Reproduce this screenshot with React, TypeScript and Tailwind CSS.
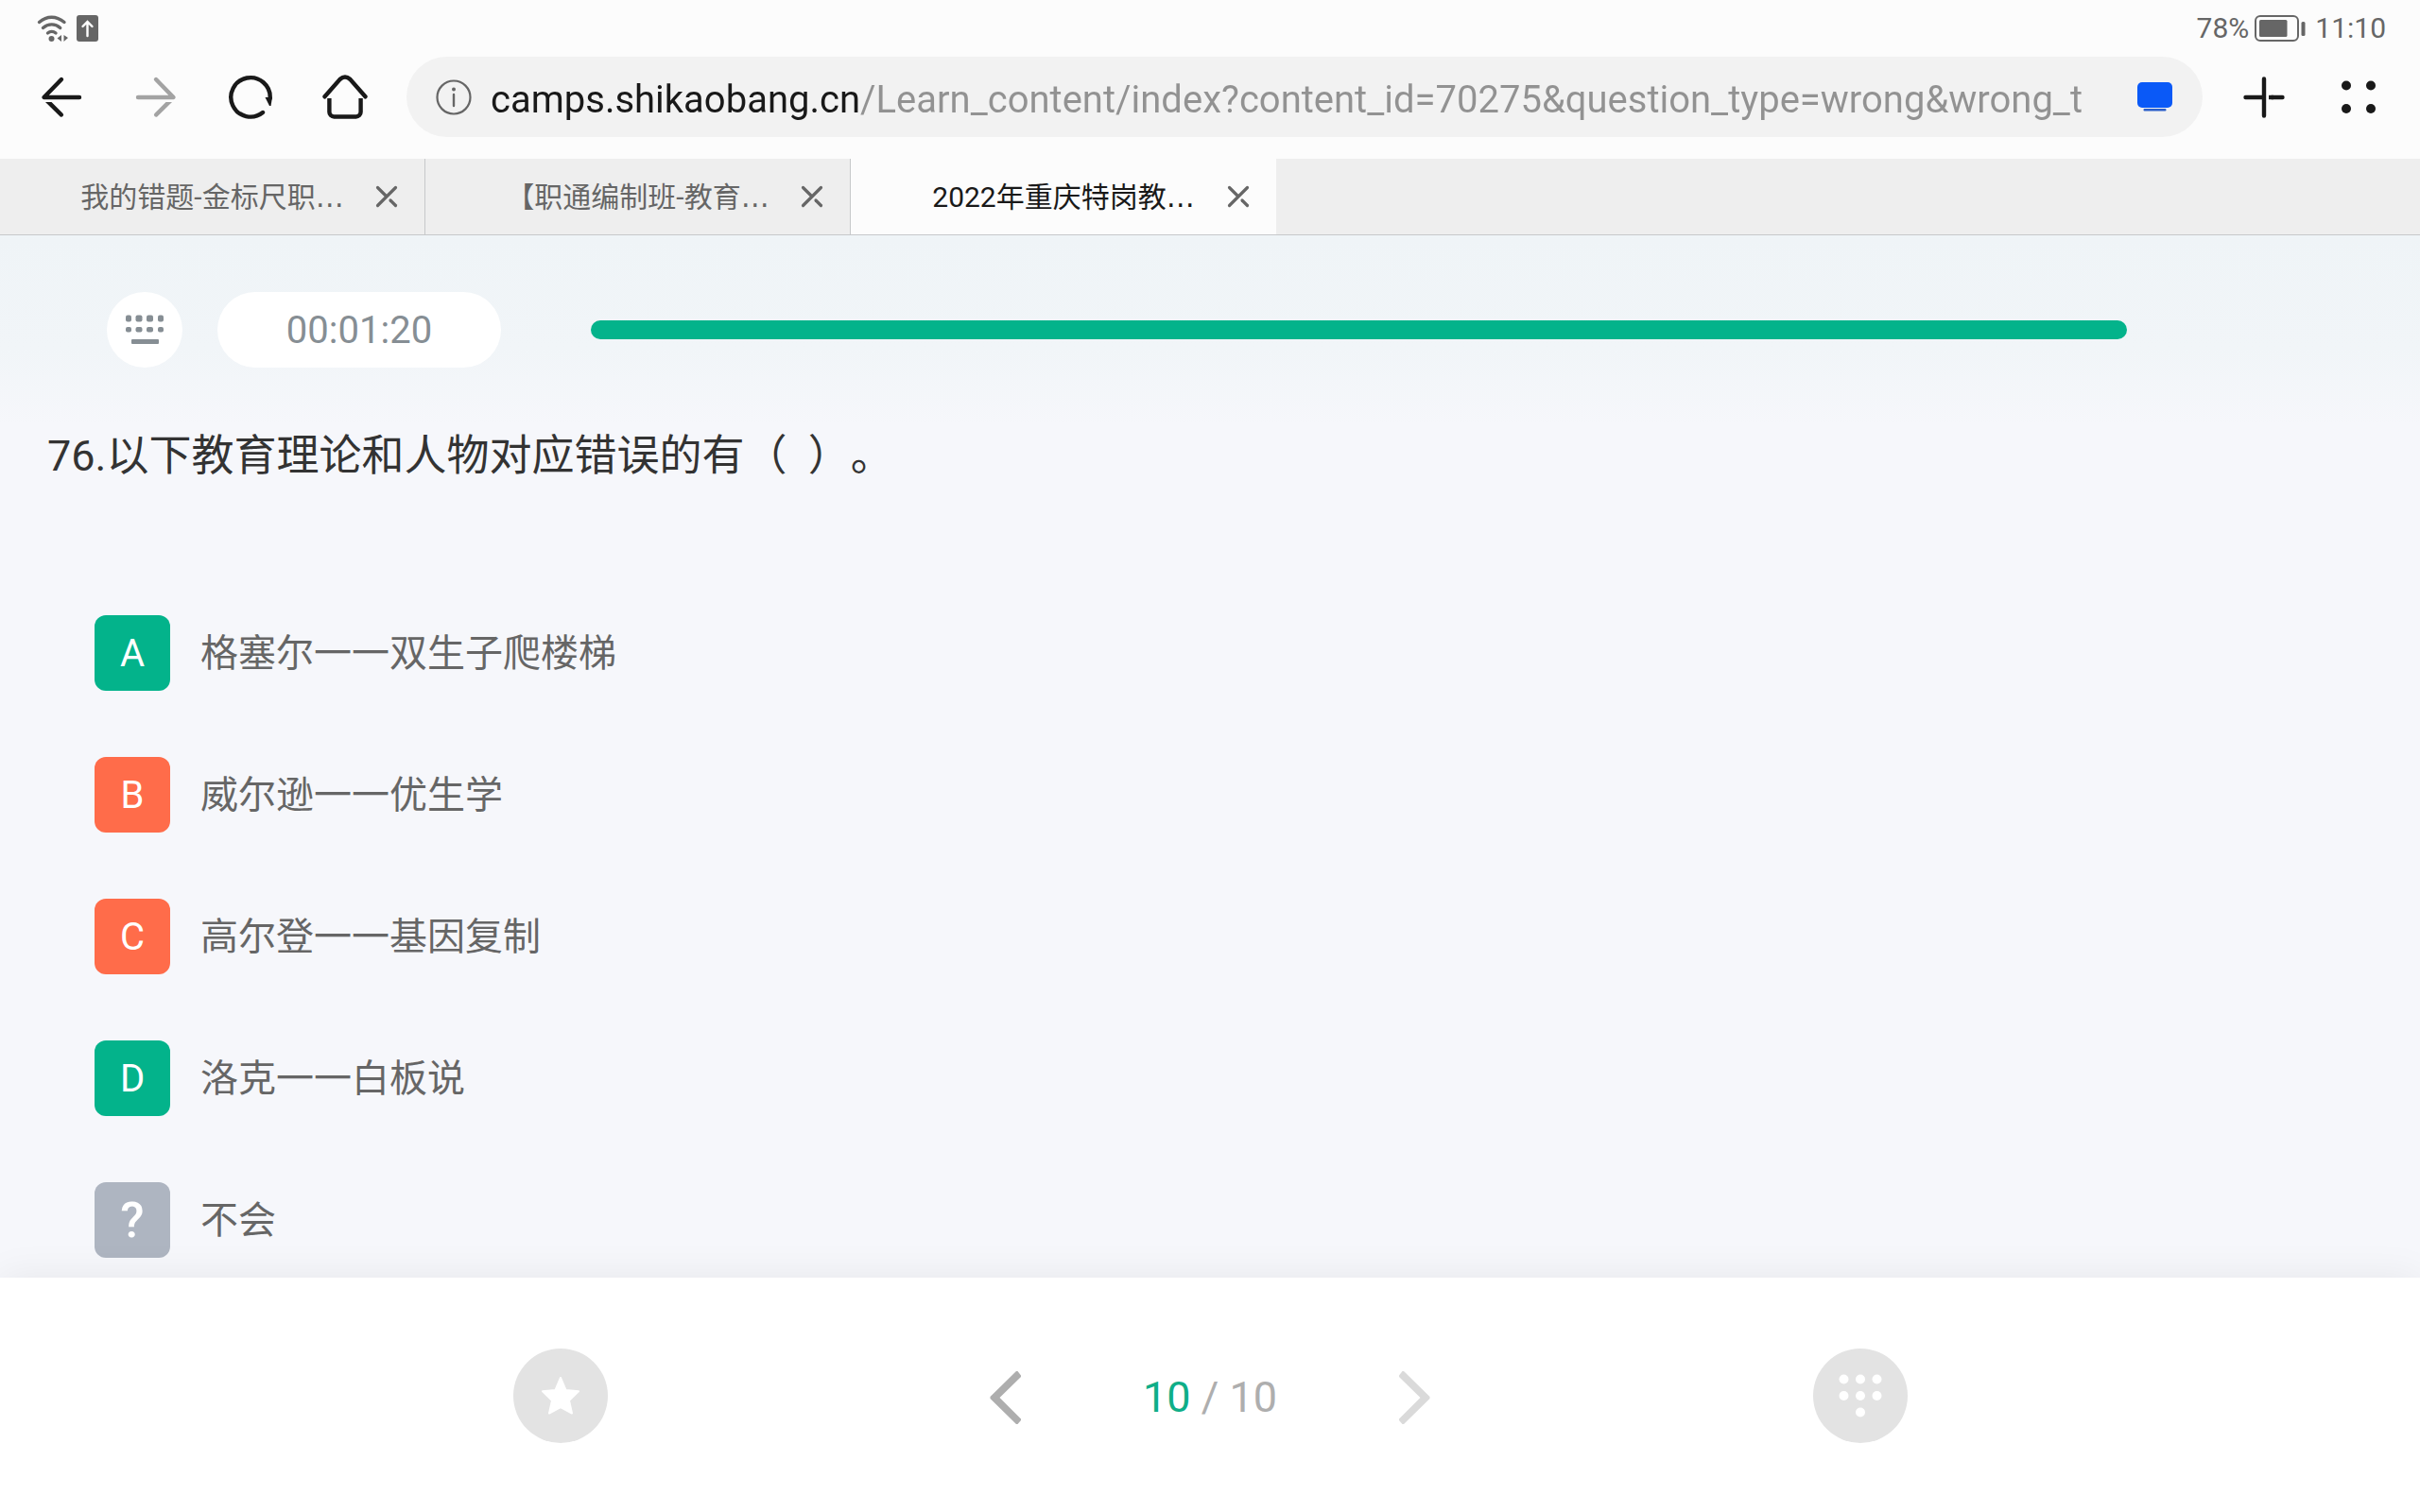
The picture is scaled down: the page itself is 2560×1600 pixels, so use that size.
import React, { useState } from "react";
import clsx from "clsx";

const tabs = [
  { id: 1, title: "我的错题-金标尺职" },
  { id: 2, title: "【职通编制班-教育" },
  { id: 3, title: "2022年重庆特岗教" },
];

const options = [
  { key: "A", text: "格塞尔一一双生子爬楼梯", color: "bg-[#03b38b]" },
  { key: "B", text: "威尔逊一一优生学", color: "bg-[#ff6c4a]" },
  { key: "C", text: "高尔登一一基因复制", color: "bg-[#ff6c4a]" },
  { key: "D", text: "洛克一一白板说", color: "bg-[#03b38b]" },
  { key: "?", text: "不会", color: "bg-[#aeb5c1]" },
];

const WifiIcon = () => (
  <svg width="34" height="30" viewBox="0 0 34 30" fill="none" aria-hidden="true">
    <g stroke="#666" strokeWidth="3.4" strokeLinecap="round">
      <path d="M2.5 8.5C10.5 1.5 20.5 1.5 29 8.5" />
      <path d="M6.5 14.5C12 9.7 19.5 9.7 24.7 14.5" />
      <path d="M11.5 20C14 18 17.5 18 20 20" />
    </g>
    <circle cx="15.5" cy="26" r="3" fill="#666" />
    <path d="M26 22v7l-4.500-3.500zM28.500 22l4.500 3-4.500 4z" fill="#666" />
  </svg>
);

const UploadIcon = () => (
  <svg width="23" height="28" viewBox="0 0 23 28" fill="none" aria-hidden="true">
    <rect width="23" height="28" rx="3" fill="#666" />
    <path
      d="M11.5 22V8M6.5 12l5-5 5 5"
      stroke="#fff"
      strokeWidth="2.4"
      strokeLinecap="round"
    />
  </svg>
);

const BatteryIcon = () => (
  <svg width="54" height="28" viewBox="0 0 54 28" fill="none" aria-hidden="true">
    <rect x="1" y="1" width="45" height="26" rx="5" stroke="#666" strokeWidth="2" />
    <rect x="5" y="5" width="29.5" height="18" rx="1.5" fill="#666" />
    <rect x="49.5" y="7" width="4" height="15" rx="1.5" fill="#666" />
  </svg>
);

const ArrowIcon = ({ flip }: { flip?: boolean }) => (
  <svg
    width="48"
    height="48"
    viewBox="0 0 48 48"
    fill="none"
    aria-hidden="true"
    className={clsx(flip && "-scale-x-100")}
  >
    <path
      d="M24 5 5.500 24H43"
      stroke="currentColor"
      strokeWidth="4.4"
      strokeLinecap="round"
      strokeLinejoin="round"
    />
    <path d="M7 29h6.500l12 12a2.200 2.200 0 0 1-3 3.200z" fill="currentColor" />
  </svg>
);

const ReloadIcon = () => (
  <svg width="48" height="48" viewBox="0 0 48 48" fill="none" aria-hidden="true">
    <path
      d="M37 40A20.700 20.700 0 1 1 44.700 25"
      stroke="#191919"
      strokeWidth="4.4"
      strokeLinecap="round"
    />
    <path d="M39.5 24H47L45.500 33h-1.500z" fill="#191919" />
  </svg>
);

const HomeIcon = () => (
  <svg width="48" height="48" viewBox="0 0 48 48" fill="none" aria-hidden="true">
    <path
      d="M2.5 23.300 18.500 5Q24 0 29.500 5L45.500 23.300"
      stroke="#191919"
      strokeWidth="4.4"
      strokeLinecap="round"
    />
    <path
      d="M7.4 25V39.500a5 5 0 0 0 5 5h23.200a5 5 0 0 0 5-5V25"
      stroke="#191919"
      strokeWidth="4.4"
    />
  </svg>
);

const InfoIcon = () => (
  <svg width="38" height="38" viewBox="0 0 38 38" fill="none" aria-hidden="true">
    <circle cx="19" cy="19" r="17.5" stroke="#666" strokeWidth="2.2" />
    <circle cx="19" cy="10.5" r="2" fill="#666" />
    <path d="M19 16v12" stroke="#666" strokeWidth="2.4" strokeLinecap="round" />
  </svg>
);

const CloseIcon = () => (
  <svg width="24" height="24" viewBox="0 0 24 24" fill="none" aria-hidden="true">
    <g stroke="#666" strokeWidth="3.2" strokeLinecap="round">
      <path d="M21.5 2.5 2.500 21.500M2.500 2.500 11.500 11.500" />
      <path d="M16 16l5.5 5.5" />
    </g>
  </svg>
);

const Chevron = ({ flip }: { flip?: boolean }) => (
  <svg
    width="34"
    height="58"
    viewBox="0 0 34 58"
    fill="currentColor"
    aria-hidden="true"
    className={clsx(flip && "-scale-x-100")}
  >
    <path d="M28 1h1.500L33 5.500v1.500L10.500 29 33 51.500v1.500L29.500 57H28L.500 30v-2z" />
  </svg>
);

const KeyboardIcon = () => (
  <svg width="40" height="32" viewBox="0 0 40 32" fill="#868e94" aria-hidden="true">
    {[0, 10.5, 22, 34].map((x, i) => (
      <g key={x}>
        <rect x={x} y="0.5" width={i % 3 ? 7 : 6} height="7" rx="2" />
        <rect x={x} y="13" width={i % 3 ? 7 : 6} height="5.5" rx="2" />
      </g>
    ))}
    <rect x="6" y="26" width="29" height="5" rx="1" />
  </svg>
);

const KeypadIcon = () => (
  <svg width="46" height="46" viewBox="0 0 46 46" fill="#fff" aria-hidden="true">
    {[5.5, 23, 40.5].map((x) => (
      <g key={x}>
        <circle cx={x} cy="5.5" r="5" />
        <circle cx={x} cy="23" r="5" />
      </g>
    ))}
    <circle cx="23" cy="40.5" r="5" />
  </svg>
);

const App = () => {
  const [activeTab, setActiveTab] = useState(3);
  const [url, setUrl] = useState(
    "camps.shikaobang.cn/Learn_content/index?content_id=70275&question_type=wrong&wrong_t"
  );

  return (
    <div className="min-h-screen w-full flex flex-col bg-[#fcfcfc] font-[Roboto,'Noto_Sans_CJK_SC',sans-serif] [text-spacing-trim:space-all]">
      <header>
        <div className="h-[60px] flex items-center justify-between pl-[39px] pr-9 text-[30px] leading-none text-[#666]">
          <div className="flex items-center gap-2">
            <WifiIcon />
            <UploadIcon />
          </div>
          <div className="flex items-center">
            <span>78%</span>
            <span className="ml-1.5 mr-2.5">
              <BatteryIcon />
            </span>
            <span>11:10</span>
          </div>
        </div>

        <div className="flex items-center px-[15px] pb-[23px] text-[#191919]">
          <button aria-label="后退" className="w-[100px] flex justify-center">
            <ArrowIcon />
          </button>
          <button
            aria-label="前进"
            className="w-[100px] flex justify-center text-[#a3a3a3]"
          >
            <ArrowIcon flip />
          </button>
          <button aria-label="刷新" className="w-[100px] flex justify-center">
            <ReloadIcon />
          </button>
          <button aria-label="主页" className="w-[100px] flex justify-center">
            <HomeIcon />
          </button>
          <div className="flex-1 min-w-0 h-[85px] mx-[15px] pl-[31px] pr-8 flex items-center rounded-full bg-[#f2f2f2]">
            <InfoIcon />
            {/* host is dark, the rest of the address is grey */}
            <input
              aria-label="网址"
              className="flex-1 min-w-0 ml-5 mr-8 h-[60px] pt-1.5 text-[40px] outline-none text-transparent bg-clip-text bg-[linear-gradient(to_right,#191919_391px,#929292_391px)]"
              value={url}
              onChange={(event) => setUrl(event.target.value)}
            />
            <button aria-label="电脑模式">
              <svg width="37" height="31" viewBox="0 0 37 31" aria-hidden="true">
                <rect width="37" height="27" rx="5" fill="#0a59f7" />
                <rect x="6.5" y="28" width="24" height="2.5" rx="1" fill="#2b5fc9" />
              </svg>
            </button>
          </div>
          <button aria-label="新建标签页" className="w-[100px] flex justify-center">
            <svg width="44" height="44" viewBox="0 0 44 44" fill="none" aria-hidden="true">
              <g stroke="#191919" strokeWidth="4.4" strokeLinecap="round">
                <path d="M22 2.5v39M2.500 22H20M41.500 22H30" />
              </g>
              <path d="M27 19.8h5v4.400h-5z" fill="#191919" />
            </svg>
          </button>
          <button aria-label="菜单" className="w-[100px] flex justify-center">
            <svg width="36" height="36" viewBox="0 0 36 36" fill="#191919" aria-hidden="true">
              <circle cx="5" cy="5.5" r="5" />
              <circle cx="31" cy="5.5" r="5" />
              <circle cx="5" cy="30" r="5" />
              <circle cx="31" cy="30" r="5" />
            </svg>
          </button>
        </div>

        <nav className="flex h-[81px] bg-[#eee] border-b border-[#c6c8ca]">
          {tabs.map((tab) => (
            <div
              key={tab.id}
              className={clsx(
                "w-[450px] flex items-center pl-20 pr-7",
                tab.id === activeTab
                  ? "bg-[#fcfcfc] text-[#191919]"
                  : "border-r border-[#c6c8ca] text-[#666]"
              )}
            >
              <button
                className="flex-1 mr-7 flex justify-center text-[30px] whitespace-nowrap"
                onClick={() => setActiveTab(tab.id)}
              >
                {tab.title}
                <span className="font-['DejaVu_Sans',sans-serif]">…</span>
              </button>
              <button aria-label="关闭标签页">
                <CloseIcon />
              </button>
            </div>
          ))}
        </nav>
      </header>

      <main className="flex-1 pt-[60px] pb-5 bg-[#f6f7fb] bg-[linear-gradient(to_bottom,#eff4f7_0,#f1f5f8_120px,#f6f7fb_200px)]">
        <div className="flex items-center pl-[113px] pr-[310px]">
          <button
            aria-label="键盘"
            className="size-20 flex items-center justify-center rounded-full bg-white"
          >
            <KeyboardIcon />
          </button>
          <div className="w-[300px] h-20 ml-[37px] pt-0.5 flex items-center justify-center rounded-full bg-white text-[40px] text-[#868e94]">
            00:01:20
          </div>
          <div
            role="progressbar"
            aria-label="答题进度"
            aria-valuenow={10}
            aria-valuemax={10}
            className="flex-1 h-5 ml-[95px] rounded-full bg-[#03b38b]"
          />
        </div>

        <h1 className="mt-16 pl-[50px] text-[45px] leading-[60px] text-[#333]">
          76.以下教育理论和人物对应错误的有（&nbsp;&nbsp;）。
        </h1>

        <ul className="mt-[138px] pl-[100px] flex flex-col gap-[70px]">
          {options.map((option) => (
            <li key={option.key}>
              <button className="flex items-center text-[40px] text-[#666]">
                <span
                  className={clsx(
                    "size-20 mr-8 pt-0.5 flex items-center justify-center rounded-xl text-white",
                    option.color,
                    option.key === "?" && "text-[52px] font-medium"
                  )}
                >
                  {option.key}
                </span>
                <span className="pt-0.5">{option.text}</span>
              </button>
            </li>
          ))}
        </ul>
      </main>

      <footer className="relative h-[248px] px-8 pt-0.5 bg-white shadow-[0_0_40px_rgba(0,0,0,0.07)]">
        <div className="w-full h-full max-w-[1475px] mx-auto flex items-center justify-between">
          <button
            aria-label="收藏"
            className="size-[100px] flex items-center justify-center rounded-full bg-[#e3e3e3]"
          >
            <svg width="44" height="42" viewBox="0 0 44 42" fill="#fff" aria-hidden="true">
              <path
                d="M22 2l5.5 13 13.500 1.300L31 26l3 13.500-12-6.500-12 6.500L13 26 3 16.300 16.500 15z"
                stroke="#fff"
                strokeWidth="2"
                strokeLinejoin="round"
              />
            </svg>
          </button>
          <div className="w-[466px] pt-1 flex items-center justify-between text-[45px] text-[#aeaeae]">
            <button aria-label="上一题">
              <Chevron />
            </button>
            <div>
              <span className="text-[#0fae88]">10</span> / 10
            </div>
            <button aria-label="下一题" className="text-[#dadada]">
              <Chevron flip />
            </button>
          </div>
          <button
            aria-label="答题卡"
            className="size-[100px] flex items-center justify-center rounded-full bg-[#e3e3e3]"
          >
            <KeypadIcon />
          </button>
        </div>
      </footer>
    </div>
  );
};

export default App;
